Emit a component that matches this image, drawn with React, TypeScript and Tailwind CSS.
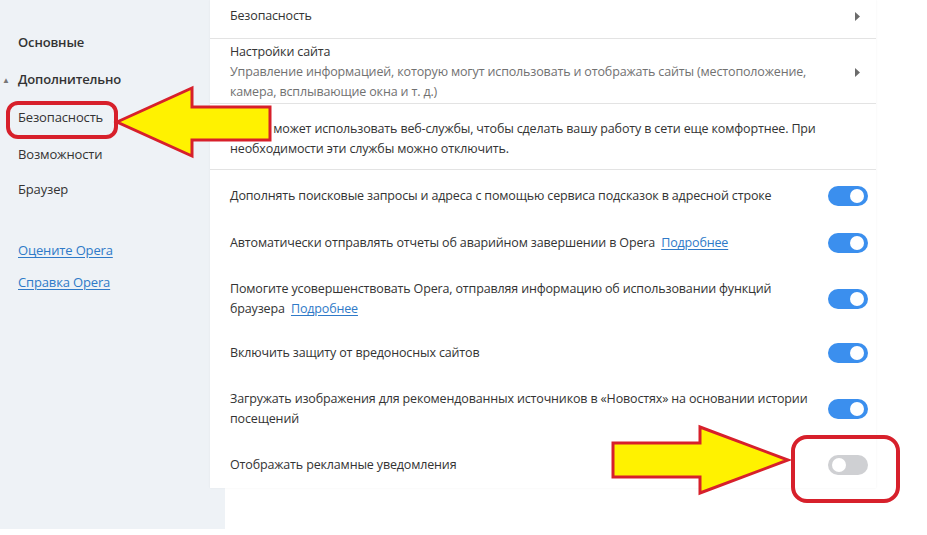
import React from "react";

const font = { fontFamily: '"Open Sans", "Noto Sans", Arial, sans-serif', letterSpacing: "-0.15px" };

function Toggle({ on }: { on: boolean }) {
  return (
    <div
      className={`relative h-[20px] w-[40px] shrink-0 rounded-full ${on ? "bg-[#3b8fee]" : "bg-[#cfd0d3]"}`}
    >
      <div
        className={`absolute top-[3px] h-[14px] w-[14px] rounded-full bg-white ${on ? "right-[4px]" : "left-[4px]"}`}
      />
    </div>
  );
}

function Chevron() {
  return (
    <svg width="6" height="9" viewBox="0 0 6 9" className="shrink-0">
      <path d="M0 0 L5 4.5 L0 9 Z" fill="#6b6b6b" />
    </svg>
  );
}

function Link({ children }: { children: React.ReactNode }) {
  return <span className="text-[#2f7ac8] underline underline-offset-2">{children}</span>;
}

function ToggleRow({ children, on, h }: { children: React.ReactNode; on: boolean; h: string }) {
  return (
    <div className={`flex items-center justify-between pl-[20px] pr-[8px] ${h}`}>
      <div className="flex-1 leading-[20px]">{children}</div>
      <Toggle on={on} />
    </div>
  );
}

export default function App() {
  return (
    <div className="relative h-[535px] w-[927px] overflow-hidden bg-white text-[12.5px] text-[#333333]" style={font}>
      <div className="flex">
        {/* Sidebar */}
        <div className="h-[529px] w-[225px] shrink-0 bg-[#eef2f6] pt-[33px] text-[13px]">
          <div className="flex h-[20px] items-center pl-[18px] font-semibold">Основные</div>
          <div className="mt-[17px] flex h-[20px] items-center font-semibold">
            <span className="w-[18px] pl-[2px] text-[8px] text-[#777]">▲</span>
            <span>Дополнительно</span>
          </div>
          <div className="mt-[18px] flex h-[20px] items-center pl-[18px]">Безопасность</div>
          <div className="mt-[17px] flex h-[20px] items-center pl-[18px]">Возможности</div>
          <div className="mt-[15px] flex h-[20px] items-center pl-[18px]">Браузер</div>
          <div className="mt-[41px] flex h-[20px] items-center pl-[18px]">
            <Link>Оцените Opera</Link>
          </div>
          <div className="mt-[12px] flex h-[20px] items-center pl-[18px]">
            <Link>Справка Opera</Link>
          </div>
        </div>

        {/* Card */}
        <div className="-ml-[15px] h-[488px] w-[666px] shrink-0 bg-white shadow-[0_0_2px_rgba(0,0,0,0.06)]">
          <div className="flex h-[39px] items-center justify-between border-b border-[#e3e3e3] pb-[6px] pl-[20px] pr-[15px]">
            <span>Безопасность</span>
            <Chevron />
          </div>
          <div className="flex h-[65px] items-center justify-between border-b border-[#e3e3e3] pl-[20px] pr-[15px] pt-[2px]">
            <div className="leading-[20px]">
              <div>Настройки сайта</div>
              <div className="text-[#717171]">
                Управление информацией, которую могут использовать и отображать сайты (местоположение,
                <br />
                камера, всплывающие окна и т. д.)
              </div>
            </div>
            <Chevron />
          </div>
          <div className="flex h-[66px] items-center border-b border-[#e3e3e3] pl-[20px] pr-[15px] pt-[4px] leading-[20px]">
            <div>
              Google может использовать веб-службы, чтобы сделать вашу работу в сети еще комфортнее. При
              <br />
              необходимости эти службы можно отключить.
            </div>
          </div>
          <div className="pt-[4px]">
            <ToggleRow on h="h-[44px]">Дополнять поисковые запросы и адреса с помощью сервиса подсказок в адресной строке</ToggleRow>
            <ToggleRow on h="h-[50px]">
              Автоматически отправлять отчеты об аварийном завершении в Opera&nbsp;&nbsp;<Link>Подробнее</Link>
            </ToggleRow>
            <ToggleRow on h="h-[62px]">
              Помогите усовершенствовать Opera, отправляя информацию об использовании функций
              <br />
              браузера&nbsp;&nbsp;<Link>Подробнее</Link>
            </ToggleRow>
            <ToggleRow on h="h-[46px]">Включить защиту от вредоносных сайтов</ToggleRow>
            <ToggleRow on h="h-[66px]">
              Загружать изображения для рекомендованных источников в «Новостях» на основании истории
              <br />
              посещений
            </ToggleRow>
            <ToggleRow on={false} h="h-[46px]">Отображать рекламные уведомления</ToggleRow>
          </div>
        </div>
      </div>

      {/* Annotations */}
      <svg className="pointer-events-none absolute left-0 top-0" width="927" height="535" viewBox="0 0 927 535">
        <rect x="8" y="103" width="108" height="34" rx="10" fill="none" stroke="#d7202b" strokeWidth="4" />
        <polygon
          points="117,122 192,88 192,107 270,107 270,140 192,140 192,156"
          fill="#fff200"
          stroke="#d7202b"
          strokeWidth="3"
          strokeLinejoin="miter"
        />
        <polygon
          points="613,443 700,443 700,427 788,460 700,493 700,477 613,477"
          fill="#fff200"
          stroke="#d7202b"
          strokeWidth="3"
        />
        <rect x="793" y="437" width="105" height="64" rx="14" fill="none" stroke="#d7202b" strokeWidth="4" />
      </svg>
    </div>
  );
}
